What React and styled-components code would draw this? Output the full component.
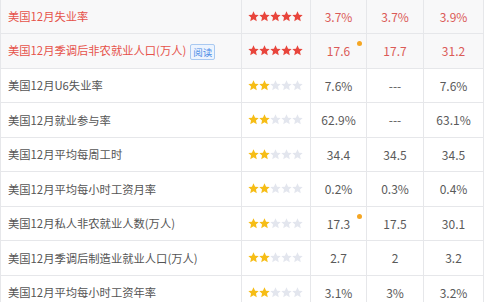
import React from 'react';
import styled, { createGlobalStyle } from 'styled-components';

const GlobalStyle = createGlobalStyle`
  html, body {
    margin: 0;
    padding: 0;
    background: #fff;
  }
  body {
    font-family: "Microsoft YaHei", "Noto Sans CJK SC", "Noto Sans", sans-serif;
    overflow: hidden;
  }
`;

const rows = [
  { name: '美国12月失业率', level: 5, prev: '3.7%', fore: '3.7%', actual: '3.9%', hot: true },
  { name: '美国12月季调后非农就业人口(万人)', level: 5, prev: '17.6', fore: '17.7', actual: '31.2', hot: true, read: true, dot: true },
  { name: '美国12月U6失业率', level: 2, prev: '7.6%', fore: '---', actual: '7.6%' },
  { name: '美国12月就业参与率', level: 2, prev: '62.9%', fore: '---', actual: '63.1%' },
  { name: '美国12月平均每周工时', level: 2, prev: '34.4', fore: '34.5', actual: '34.5' },
  { name: '美国12月平均每小时工资月率', level: 2, prev: '0.2%', fore: '0.3%', actual: '0.4%' },
  { name: '美国12月私人非农就业人数(万人)', level: 2, prev: '17.3', fore: '17.5', actual: '30.1', dot: true },
  { name: '美国12月季调后制造业就业人口(万人)', level: 2, prev: '2.7', fore: '2', actual: '3.2' },
  { name: '美国12月平均每小时工资年率', level: 2, prev: '3.1%', fore: '3%', actual: '3.2%' },
];

function Star({ color }) {
  return (
    <svg width="11" height="11" viewBox="0 0 24 24">
      <path
        fill={color}
        d="M12 0.8l3.4 7.2 7.9.9-5.9 5.4 1.7 7.8L12 18.1l-7.1 4 1.7-7.8L.7 8.9l7.9-.9z"
      />
    </svg>
  );
}

function Stars({ level, hot }) {
  const on = hot ? '#e8453c' : '#f6bd16';
  return (
    <StarRow>
      {[0, 1, 2, 3, 4].map(i => (
        <Star key={i} color={i < level ? on : '#e3e6ee'} />
      ))}
    </StarRow>
  );
}

export default function App() {
  return (
    <>
      <GlobalStyle />
      <Wrap>
        <Table>
          <colgroup>
            <col style={{ width: 241 }} />
            <col style={{ width: 69 }} />
            <col style={{ width: 56 }} />
            <col style={{ width: 57 }} />
            <col style={{ width: 60 }} />
          </colgroup>
          <tbody>
            {rows.map(r => (
              <Tr key={r.name} $hot={r.hot}>
                <NameCell $hot={r.hot}>
                  {r.name}
                  {r.read && <Badge>阅读</Badge>}
                </NameCell>
                <StarCell>
                  <Stars level={r.level} hot={r.hot} />
                </StarCell>
                <ValueCell $hot={r.hot}>
                  {r.prev}
                  {r.dot && <Dot />}
                </ValueCell>
                <ValueCell $hot={r.hot}>{r.fore}</ValueCell>
                <ValueCell $hot={r.hot}>{r.actual}</ValueCell>
              </Tr>
            ))}
          </tbody>
        </Table>
      </Wrap>
    </>
  );
}

const Wrap = styled.div`
  width: 486px;
  height: 302px;
  overflow: hidden;
`;

const Table = styled.table`
  width: 484px;
  margin-top: -1.5px;
  border-collapse: collapse;
  table-layout: fixed;
`;

const Tr = styled.tr`
  height: 34.5px;
  background: ${p => (p.$hot ? '#f8f8f9' : '#fff')};
`;

const Cell = styled.td`
  border: 1px solid #e6e7ea;
  padding: 0;
  vertical-align: middle;
  white-space: nowrap;
`;

const NameCell = styled(Cell)`
  padding-left: 7px;
  font-size: 11.3px;
  color: ${p => (p.$hot ? '#e6524a' : '#545454')};
`;

const StarCell = styled(Cell)`
  padding-left: 6px;
`;

const StarRow = styled.div`
  display: flex;
  align-items: center;
`;

const ValueCell = styled(Cell)`
  position: relative;
  text-align: center;
  font-size: 12px;
  color: ${p => (p.$hot ? '#db5a57' : '#5a5a5a')};
`;

const Dot = styled.span`
  position: absolute;
  top: 7px;
  right: 4px;
  width: 5px;
  height: 5px;
  border-radius: 50%;
  background: #f5a623;
`;

const Badge = styled.span`
  display: inline-block;
  margin-left: 4px;
  padding: 0 2px;
  height: 14px;
  line-height: 14px;
  font-size: 9.5px;
  color: #4a8be6;
  background: #edf4fe;
  border: 1px solid #a9c9f1;
  border-radius: 2px;
  vertical-align: middle;
`;
